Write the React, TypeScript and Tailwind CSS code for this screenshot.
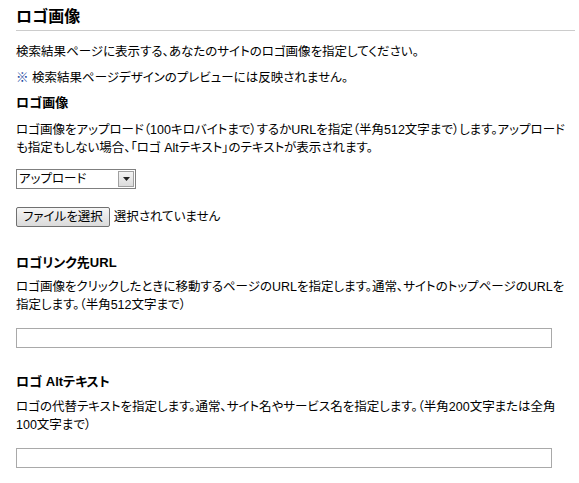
export default function App() {
  return (
    <div className="min-h-screen bg-white pl-4 pr-1 text-[12.5px] leading-[18px] text-black font-['Liberation_Sans','Noto_Sans_CJK_JP',sans-serif] [font-feature-settings:'palt']">
      <div className="border-b border-[#cccccc] pt-[7px] pb-[3px] text-[16px] font-bold leading-[20px]">ロゴ画像</div>

      <p className="mt-[12px]">検索結果ページに表示する、あなたのサイトのロゴ画像を指定してください。</p>
      <p className="mt-[8px]">
        <span className="font-bold text-[#1a47a0]">※</span> 検索結果ページデザインのプレビューには反映されません。
      </p>

      <h3 className="mt-[7px] text-[13px] font-bold">ロゴ画像</h3>
      <p className="mt-[9px] whitespace-nowrap">
        ロゴ画像をアップロード（100キロバイトまで）するかURLを指定（半角512文字まで）します。アップロード
        <br />
        も指定もしない場合、「ロゴ Altテキスト」のテキストが表示されます。
      </p>

      <div className="mt-[12px] flex h-[20px] w-[120px] items-center border border-[#7f7f7f] bg-white">
        <span className="flex-1 pl-[2px] text-[12.5px] leading-[18px]">アップロード</span>
        <span className="mr-[1px] flex h-[16px] w-[16px] items-center justify-center border border-[#a0a0a0] bg-gradient-to-b from-[#f4f4f4] to-[#dcdcdc]">
          <svg width="7" height="4" viewBox="0 0 7 4">
            <path d="M0 0h7L3.5 4z" fill="#222" />
          </svg>
        </span>
      </div>

      <div className="mt-[18px] flex items-center gap-[4px]">
        <button className="h-[20px] rounded-[2px] border border-[#707070] bg-gradient-to-b from-[#f6f6f6] to-[#dadada] px-[6px] text-[12.5px] leading-[18px]">
          ファイルを選択
        </button>
        <span>選択されていません</span>
      </div>

      <h3 className="mt-[27px] text-[13px] font-bold">ロゴリンク先URL</h3>
      <p className="mt-[6px] whitespace-nowrap">
        ロゴ画像をクリックしたときに移動するページのURLを指定します。通常、サイトのトップページのURLを
        <br />
        指定します。（半角512文字まで）
      </p>
      <input type="text" className="mt-[14px] block h-[20px] w-[536px] border border-[#a9a9a9] bg-white outline-none" />

      <h3 className="mt-[25px] text-[13px] font-bold">ロゴ Altテキスト</h3>
      <p className="mt-[7px] whitespace-nowrap">
        ロゴの代替テキストを指定します。通常、サイト名やサービス名を指定します。（半角200文字または全角
        <br />
        100文字まで）
      </p>
      <input type="text" className="mt-[14px] block h-[20px] w-[536px] border border-[#a9a9a9] bg-white outline-none" />
    </div>
  );
}
